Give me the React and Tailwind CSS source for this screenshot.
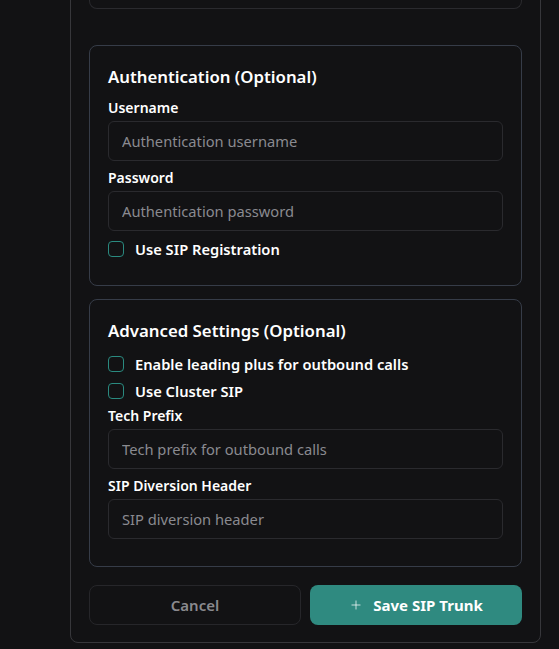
import { Plus } from "lucide-react";

function Field({ label, placeholder }) {
  return (
    <div className="flex flex-col gap-[3px]">
      <label className="text-sm leading-5 font-semibold text-white">{label}</label>
      <input
        type="text"
        placeholder={placeholder}
        className="h-10 w-full rounded-md border border-[#2a2a2e] bg-[#121214] px-[13px] text-[14.7px] text-white placeholder:text-[#8a8a90] outline-none"
      />
    </div>
  );
}

function Check({ label }) {
  return (
    <label className="flex h-5 items-center gap-[11px]">
      <span className="h-4 w-4 shrink-0 rounded-[4px] border border-[#2a8a80]" />
      <span className="text-[14.7px] font-semibold text-white">{label}</span>
    </label>
  );
}

export default function App() {
  return (
    <div
      className="h-[649px] overflow-hidden bg-[#121214] pl-[70px] pr-[18px]"
      style={{ fontFamily: '"Noto Sans", "Open Sans", sans-serif' }}
    >
      <div className="-mt-[40px] rounded-b-lg border border-[#37373b] px-[18px] pb-[17px] pt-0">
        <div className="h-[48px] rounded-b-lg border-x border-b border-[#2a2a2e]" />

        <div className="mt-[36px] rounded-lg border border-[#363c48] px-[18px] pt-[17px] pb-[26px]">
          <div className="flex flex-col gap-[7px]">
            <h3 className="text-[16.8px] leading-7 font-semibold text-white">Authentication (Optional)</h3>
            <Field label="Username" placeholder="Authentication username" />
            <Field label="Password" placeholder="Authentication password" />
            <div className="pt-px">
              <Check label="Use SIP Registration" />
            </div>
          </div>
        </div>

        <div className="mt-[13px] rounded-lg border border-[#363c48] px-[18px] pt-[17px] pb-[27px]">
          <div className="flex flex-col">
            <h3 className="text-[16.8px] leading-7 font-semibold text-white">Advanced Settings (Optional)</h3>
            <div className="mt-[9px] flex flex-col gap-[7px]">
              <Check label="Enable leading plus for outbound calls" />
              <Check label="Use Cluster SIP" />
            </div>
            <div className="mt-[5px] flex flex-col gap-[7px]">
              <Field label="Tech Prefix" placeholder="Tech prefix for outbound calls" />
              <Field label="SIP Diversion Header" placeholder="SIP diversion header" />
            </div>
          </div>
        </div>

        <div className="mt-[18px] grid grid-cols-2 gap-[9px]">
          <button className="h-10 rounded-lg border border-[#26262a] text-[15px] font-semibold text-[#8a8a8e]">
            Cancel
          </button>
          <button className="flex h-10 items-center justify-center gap-[10px] rounded-lg bg-[#2f8a80] text-[15px] font-bold text-white">
            <Plus className="h-[14px] w-[14px]" strokeWidth={1.25} />
            Save SIP Trunk
          </button>
        </div>
      </div>
    </div>
  );
}
